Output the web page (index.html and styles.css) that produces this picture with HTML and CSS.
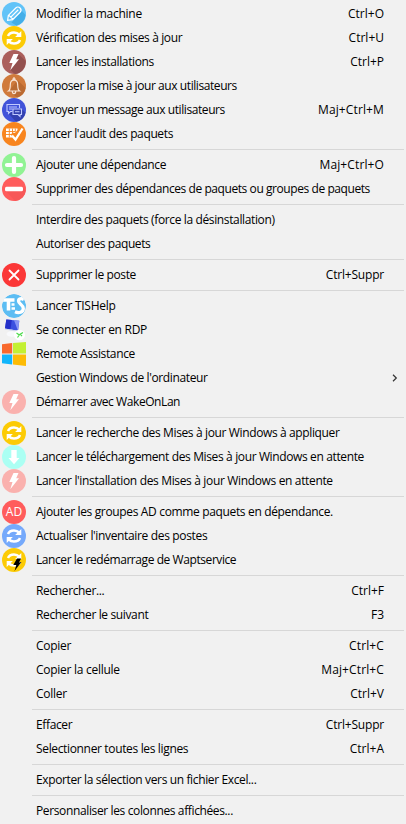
FILE: index.html
```html
<!DOCTYPE html>
<html lang="fr">
<head>
<meta charset="utf-8">
<title>Menu contextuel</title>
<link rel="stylesheet" href="styles.css">
</head>
<body>
<svg width="0" height="0" class="defs">
  <symbol id="sync" viewBox="0 0 24 24">
    <path d="M6 10C7 7.500 9 6.500 12 6.500c2.500 0 4 .9 5.200 2.200M18 14c-1 2.500-3 3.500-6 3.500-2.500 0-4-.9-5.200-2.200" fill="none" stroke="#fff" stroke-width="2.500"/>
    <path d="M19.300 5v6h-6.200zM4.700 19v-6h6.200z" fill="#fff"/>
  </symbol>
  <symbol id="bolt" viewBox="0 0 24 24">
    <path d="M11.500 4h5l-2.300 5.300H17L8.300 20.200l2.200-7.200H7.300z" fill="#fff"/>
  </symbol>
</svg>
<ul class="menu">
  <li class="item"><svg class="icon" viewBox="0 0 24 24"><circle cx="12" cy="12" r="12" fill="#61c3f8"/><path d="M9.500 20.500L20 9l3.500 4a12 12 0 0 1-9 10.700z" fill="#43aee8"/><g transform="rotate(45 12 12)" fill="none" stroke="#fff" stroke-width="1.200"><path d="M9 6.500a3 3 0 0 1 6 0V17l-3 4-3-4zM9 16.500h6M12 6v10.500"/></g></svg><span class="label wide">Modifier la machine</span><span class="key">Ctrl+O</span></li>
  <li class="item"><svg class="icon" viewBox="0 0 24 24"><circle cx="12" cy="12" r="12" fill="#fccb05"/><use href="#sync"/></svg><span class="label">Vérification des mises à jour</span><span class="key">Ctrl+U</span></li>
  <li class="item"><svg class="icon" viewBox="0 0 24 24"><circle cx="12" cy="12" r="12" fill="#ab5f5c"/><path d="M16.500 4l7 7A12 12 0 0 1 13 24l-4.700-4z" fill="#92504e"/><use href="#bolt"/></svg><span class="label">Lancer les installations</span><span class="key">Ctrl+P</span></li>
  <li class="item"><svg class="icon" viewBox="0 0 24 24"><circle cx="12" cy="12" r="12" fill="#d07a3c"/><path d="M15.500 6l8 8A12 12 0 0 1 15 23.600l-8-6.600z" fill="#ba6a32"/><path d="M6.500 17c1.500-1 1.800-2 1.800-6 0-3 1.500-4.800 3.700-4.800s3.700 1.800 3.700 4.800c0 4 .3 5 1.800 6zM10.300 17.500c0 2.700 3.400 2.700 3.400 0M11.200 6c-.8-2.800 2.400-2.800 1.600 0" fill="none" stroke="#f9e3d3" stroke-width="1.200"/></svg><span class="label tight">Proposer la mise à jour aux utilisateurs</span></li>
  <li class="item"><svg class="icon" viewBox="0 0 24 24"><circle cx="12" cy="12" r="12" fill="#4153d9"/><path d="M19.500 11l4 3.500A12 12 0 0 1 14 23.800L6 15z" fill="#3341b0"/><path d="M10.500 13.500H8.500l-2 2v-2H5V6.500h12.500V10M7 9h8M7 11h3.500" fill="none" stroke="#c1caff" stroke-width="1.100"/><path d="M11 11h8.500v5.500H18v2l-2-2h-5zM13 13.800h4.500" fill="#3341b0" stroke="#c1caff" stroke-width="1.100"/></svg><span class="label tight">Envoyer un message aux utilisateurs</span><span class="key long">Maj+Ctrl+M</span></li>
  <li class="item"><svg class="icon" viewBox="0 0 24 24"><circle cx="12" cy="12" r="12" fill="#f8851f"/><path d="M4 6.500h11.500V8L13 11l-2.500-.5-1.500 2 1.500 3H4z" fill="#fff"/><path d="M4 9.500h9M4 12.500h6M7.300 6.500v9M10.500 6.500v5M13.300 6.500v4" stroke="#f8851f" stroke-width=".9"/><path d="M10 13.500l3.500 4L20.500 6.500" fill="none" stroke="#fff" stroke-width="2.300"/></svg><span class="label">Lancer l'audit des paquets</span></li>
  <li class="sep"></li>
  <li class="item"><svg class="icon" viewBox="0 0 24 24"><circle cx="12" cy="12" r="12" fill="#91f394"/><path d="M12 5v14M5 12h14" stroke="#fff" stroke-width="4.200" stroke-linecap="round"/></svg><span class="label">Ajouter une dépendance</span><span class="key long">Maj+Ctrl+O</span></li>
  <li class="item"><svg class="icon" viewBox="0 0 24 24"><circle cx="12" cy="12" r="12" fill="#ff5c5c"/><path d="M20 10.500l3.800 2.500A12 12 0 0 1 13 24L4 14z" fill="#f75757"/><rect x="3" y="9.800" width="18" height="4.400" rx="1.500" fill="#fff"/></svg><span class="label tight">Supprimer des dépendances de paquets ou groupes de paquets</span></li>
  <li class="sep"></li>
  <li class="item"><span class="icon"></span><span class="label">Interdire des paquets (force la désinstallation)</span></li>
  <li class="item"><span class="icon"></span><span class="label tight">Autoriser des paquets</span></li>
  <li class="sep"></li>
  <li class="item"><svg class="icon" viewBox="0 0 24 24"><circle cx="12" cy="12" r="12" fill="#fb3737"/><path d="M7.500 7.500l9 9M16.500 7.500l-9 9" stroke="#fff" stroke-width="1.800" stroke-linecap="round"/></svg><span class="label">Supprimer le poste</span><span class="key short">Ctrl+Suppr</span></li>
  <li class="sep"></li>
  <li class="item"><svg class="icon round" viewBox="0 0 24 24"><circle cx="12" cy="12" r="12" fill="#5cbdf3"/><path d="M1 6h11.500M6.500 6v10.500" fill="none" stroke="#fff" stroke-width="3.600"/><path d="M21.800 5.500c-2.800-1.500-5.300-.8-5.300 1.500 0 3 4.800 3.600 4.800 7.500 0 3.700-4.300 5-8.300 3.300" fill="none" stroke="#fff" stroke-width="3.300"/><path d="M9.500 10.500h3M9.500 14.500h3.500" stroke="#fff" stroke-width="2.400"/></svg><span class="label wide">Lancer TISHelp</span></li>
  <li class="item"><svg class="icon" viewBox="0 0 24 24"><path d="M4.300 1.500l13 1.300-1.300 10L3 10.500z" fill="#3b51e0"/><path d="M4.300 1.500l5.500.5-1.300 9.500L3 10.500z" fill="#2430c8"/><path d="M12 2.300l5.300.5-1.300 10z" fill="#8795f5"/><path d="M3 10.500l13 2.300-.3 1L2.800 11.500z" fill="#cfd6ee"/><ellipse cx="10" cy="16" rx="5.500" ry="2.800" fill="#f8f9fc"/><ellipse cx="17.500" cy="17" rx="5.500" ry="5.300" fill="#fff"/><path d="M14.500 15l2.800 2-1.800 2.500M21 14.500l-2.800 1.700 1.800 2" fill="none" stroke="#4ddc4c" stroke-width="1.200"/></svg><span class="label wide">Se connecter en RDP</span></li>
  <li class="item"><svg class="icon" viewBox="0 0 24 24"><path d="M0 2.300l10.200-1.300v10.500H0z" fill="#f8682c"/><path d="M11 1.100L24 0v11.500H11z" fill="#c3f032"/><path d="M0 12.500h10.200v10L0 21.200z" fill="#12b5fb"/><path d="M11 12.500h13V24l-13-1.600z" fill="#fdbb05"/></svg><span class="label">Remote Assistance</span></li>
  <li class="item"><span class="icon"></span><span class="label">Gestion Windows de l'ordinateur</span><svg class="arrow" viewBox="0 0 6 8"><path d="M1 .8L4.300 4 1 7.200" fill="none" stroke="#333" stroke-width="1.200"/></svg></li>
  <li class="item"><svg class="icon" viewBox="0 0 24 24"><circle cx="12" cy="12" r="12" fill="#fab1ae"/><use href="#bolt"/></svg><span class="label tight">Démarrer avec WakeOnLan</span></li>
  <li class="sep"></li>
  <li class="item"><svg class="icon" viewBox="0 0 24 24"><circle cx="12" cy="12" r="12" fill="#fccb05"/><use href="#sync"/></svg><span class="label">Lancer le recherche des Mises à jour Windows à appliquer</span></li>
  <li class="item"><svg class="icon" viewBox="0 0 24 24"><circle cx="12" cy="12" r="12" fill="#abfff3"/><path d="M9.300 5h5.400v8h2.800L12 19.300 6.500 13h2.800z" fill="#fff"/></svg><span class="label">Lancer le téléchargement des Mises à jour Windows en attente</span></li>
  <li class="item"><svg class="icon" viewBox="0 0 24 24"><circle cx="12" cy="12" r="12" fill="#fab1ae"/><use href="#bolt"/></svg><span class="label mid">Lancer l'installation des Mises à jour Windows en attente</span></li>
  <li class="sep"></li>
  <li class="item"><svg class="icon" viewBox="0 0 24 24"><circle cx="12" cy="12" r="12" fill="#ff5c5c"/><text x="12" y="16.300" class="ad">AD</text></svg><span class="label mid">Ajouter les groupes AD comme paquets en dépendance.</span></li>
  <li class="item"><svg class="icon" viewBox="0 0 24 24"><circle cx="12" cy="12" r="12" fill="#75a9fb"/><use href="#sync"/></svg><span class="label mid">Actualiser l'inventaire des postes</span></li>
  <li class="item"><svg class="icon" viewBox="0 0 24 24"><circle cx="12" cy="12" r="12" fill="#fccb05"/><use href="#sync"/><path d="M15 10.500h4l-2 4 2.500-.5-7 9 1.800-6h-3z" fill="#000"/></svg><span class="label tight">Lancer le redémarrage de Waptservice</span></li>
  <li class="sep"></li>
  <li class="item"><span class="icon"></span><span class="label">Rechercher...</span><span class="key">Ctrl+F</span></li>
  <li class="item"><span class="icon"></span><span class="label">Rechercher le suivant</span><span class="key">F3</span></li>
  <li class="sep"></li>
  <li class="item"><span class="icon"></span><span class="label wide">Copier</span><span class="key long">Ctrl+C</span></li>
  <li class="item"><span class="icon"></span><span class="label wide">Copier la cellule</span><span class="key long">Maj+Ctrl+C</span></li>
  <li class="item"><span class="icon"></span><span class="label wide">Coller</span><span class="key">Ctrl+V</span></li>
  <li class="sep"></li>
  <li class="item"><span class="icon"></span><span class="label">Effacer</span><span class="key short">Ctrl+Suppr</span></li>
  <li class="item"><span class="icon"></span><span class="label mid">Selectionner toutes les lignes</span><span class="key">Ctrl+A</span></li>
  <li class="sep"></li>
  <li class="item"><span class="icon"></span><span class="label">Exporter la sélection vers un fichier Excel...</span></li>
  <li class="sep"></li>
  <li class="item"><span class="icon"></span><span class="label">Personnaliser les colonnes affichées...</span></li>
</ul>
</body>
</html>
```
FILE: styles.css
```css
* { box-sizing: border-box; }
html, body { margin: 0; height: 100%; overflow: hidden; }
body {
  background: #f1f1f1;
  color: #000;
  font: 12px/24px "Segoe UI", "Open Sans", sans-serif;
}
.defs { display: none; }
.menu { list-style: none; margin: 0; padding: 2px 2px 0; }
.item { display: flex; align-items: center; height: 24px; padding-right: 20px; white-space: nowrap; }
.icon { flex: none; width: 24px; height: 24px; margin-right: 10px; }
.icon.round { border-radius: 50%; }
.label, .key { line-height: 24px; }
.label { flex: 1; letter-spacing: -0.37px; }
.label.wide { letter-spacing: -0.27px; }
.label.mid { letter-spacing: -0.345px; }
.label.tight { letter-spacing: -0.425px; }
.key.long { letter-spacing: 0.12px; }
.key.short { letter-spacing: -0.2px; }
.arrow { width: 6px; height: 8px; margin-right: -14px; }
.sep { height: 7px; padding: 3px 0 0 30px; }
.sep::before { content: ""; display: block; height: 1px; background: #d7d7d7; }
.ad { font: 500 12px "Open Sans", sans-serif; fill: #fff; text-anchor: middle; }
```
